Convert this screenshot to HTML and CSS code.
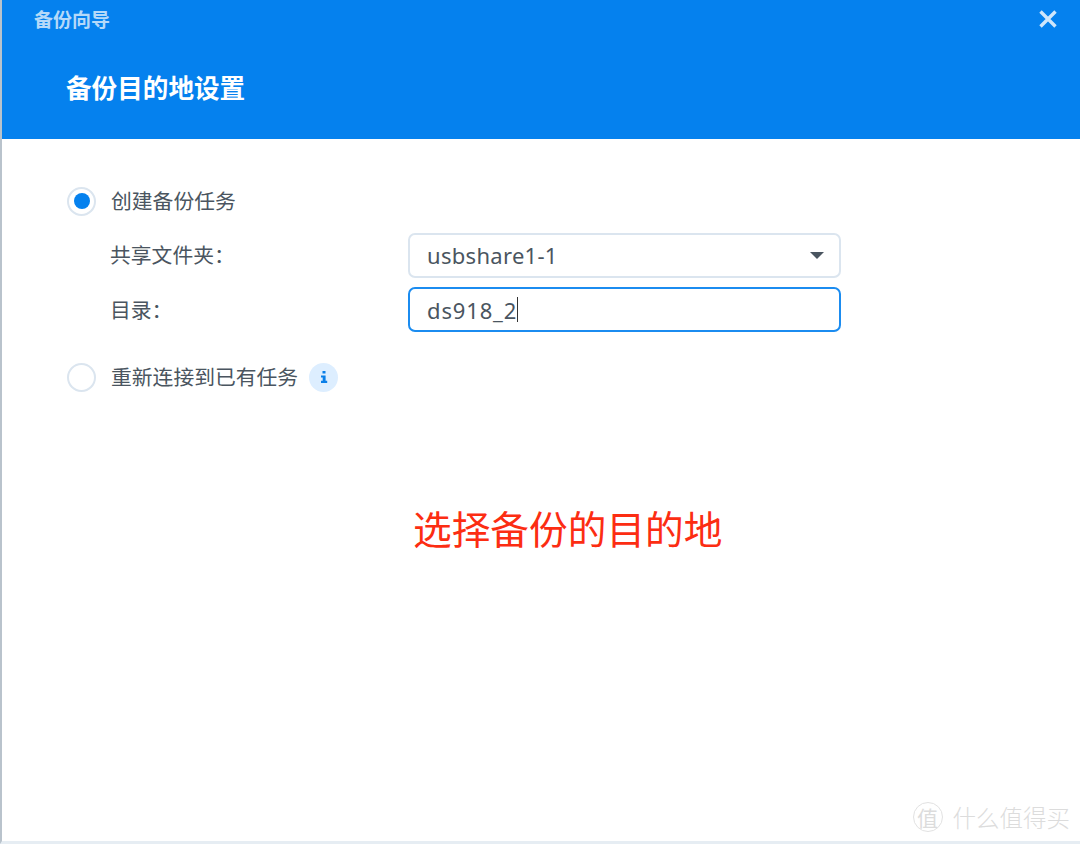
FILE: index.html
```html
<!DOCTYPE html>
<html lang="zh-CN">
<head>
<meta charset="utf-8">
<title>备份向导</title>
<link rel="stylesheet" href="styles.css">
</head>
<body>
<div class="window">
  <header class="header">
    <div class="top-row">
      <span class="app-title">备份向导</span>
      <svg class="close" width="18" height="18" viewBox="0 0 18 18" aria-hidden="true"><path d="M1.500 1.500L16.500 16.500M16.500 1.500L1.500 16.500" stroke="#cfe6fb" stroke-width="3.4" fill="none"/></svg>
    </div>
    <h1 class="step-title">备份目的地设置</h1>
  </header>
  <main class="body">
    <div class="radio-row">
      <span class="radio checked"></span>
      <span class="label">创建备份任务</span>
    </div>
    <div class="field-row first">
      <span class="label field-label">共享文件夹：</span>
      <div class="control select"><span class="value">usbshare1-1</span><span class="caret"></span></div>
    </div>
    <div class="field-row">
      <span class="label field-label dir-label">目录：</span>
      <div class="control focused"><span class="value">ds918_2</span><span class="cursor"></span></div>
    </div>
    <div class="radio-row second">
      <span class="radio"></span>
      <span class="label">重新连接到已有任务</span>
      <span class="info"><svg width="12" height="14" viewBox="0 0 12 14" aria-hidden="true"><path d="M4.500 1h3v2.600h-3zM3 5.400h4.600v5.400H9.200V13H3v-2.200h1.700V7.600H3z" fill="#0a7fe8"/></svg></span>
    </div>
    <p class="note">选择备份的目的地</p>
  </main>
  <div class="watermark">
    <span class="wm-badge">值</span>
    <span class="wm-text">什么值得买</span>
  </div>
</div>
</body>
</html>
```
FILE: styles.css
```css
* { box-sizing: border-box; }
html, body { margin: 0; padding: 0; }
body {
  width: 1080px;
  height: 844px;
  overflow: hidden;
  background: #fff;
  font-family: "Noto Sans", "Noto Sans CJK SC", sans-serif;
  color: #4a5560;
}
.window {
  position: relative;
  width: 1080px;
  height: 844px;
  display: flex;
  flex-direction: column;
  border-left: 2px solid #b9c3cc;
  border-bottom: 3px solid #e6edf3;
}
.header {
  height: 139px;
  flex: none;
  background: #0581ee;
  padding: 0 0 0 32px;
}
.top-row {
  height: 40px;
  display: flex;
  align-items: flex-start;
  justify-content: space-between;
  padding: 5px 23px 0 0;
}
.app-title {
  font-family: "Noto Sans CJK SC", sans-serif;
  font-size: 19px;
  line-height: 28px;
  font-weight: 700;
  color: #b5d9f9;
}
.close { margin-top: 5px; }
.step-title {
  margin: 27px 0 0 32px;
  font-family: "Noto Sans CJK SC", sans-serif;
  font-size: 25.6px;
  line-height: 40px;
  font-weight: 700;
  color: #fff;
}
.body {
  flex: 1;
  padding: 47px 0 0 65px;
}
.radio-row {
  height: 30px;
  display: flex;
  align-items: center;
}
.radio-row.second { margin-top: 30px; }
.radio {
  width: 29px;
  height: 29px;
  flex: none;
  border: 2px solid #dbe5ef;
  border-radius: 50%;
  background: #fff;
  display: flex;
  align-items: center;
  justify-content: center;
  margin-right: 15px;
}
.radio.checked::after {
  content: "";
  width: 16px;
  height: 16px;
  border-radius: 50%;
  background: #0581ee;
}
.label {
  font-family: "Noto Sans CJK SC", sans-serif;
  font-size: 20.8px;
  line-height: 30px;
  padding-bottom: 3px;
  color: #4a5560;
}
.field-row {
  display: flex;
  align-items: center;
  margin-top: 9px;
  padding-left: 44px;
}
.field-row.first { margin-top: 17px; }
.field-label { width: 297px; flex: none; margin-left: -1px; margin-right: 1px; }
.dir-label { padding-bottom: 1px; }
.control {
  width: 433px;
  height: 45px;
  border: 2px solid #dbe5ef;
  border-radius: 7px;
  padding: 0 17px;
  display: flex;
  align-items: center;
  font-size: 22px;
  letter-spacing: 0.3px;
  color: #4a5560;
  background: #fff;
}
.value { padding-bottom: 2px; }
.control.select { justify-content: space-between; padding-right: 15px; }
.control.focused { border-color: #1b8cf0; letter-spacing: 0.85px; }
.focused .value { padding-bottom: 0; }
.caret {
  width: 0;
  height: 0;
  border-left: 7px solid transparent;
  border-right: 7px solid transparent;
  border-top: 7px solid #4a5560;
}
.cursor {
  width: 1px;
  height: 25px;
  background: #333;
}
.info {
  width: 29px;
  height: 29px;
  margin-left: 11px;
  border-radius: 50%;
  background: #ddeeff;
  display: flex;
  align-items: center;
  justify-content: center;
}
.note {
  margin: 110px 0 0 346px;
  font-family: "Noto Sans CJK SC", sans-serif;
  font-size: 38.7px;
  line-height: 50px;
  color: #fc2d12;
}
.watermark {
  position: absolute;
  right: 10px;
  bottom: 9px;
  display: flex;
  align-items: center;
  gap: 10px;
  color: #dcdcdc;
  font-family: "Noto Sans CJK SC", sans-serif;
}
.wm-badge {
  width: 30px;
  height: 30px;
  border: 1px solid #e2e2e2;
  border-radius: 50%;
  display: flex;
  align-items: center;
  justify-content: center;
  font-size: 21px;
}
.wm-text { font-size: 23.5px; font-weight: 300; line-height: 30px; }
```
